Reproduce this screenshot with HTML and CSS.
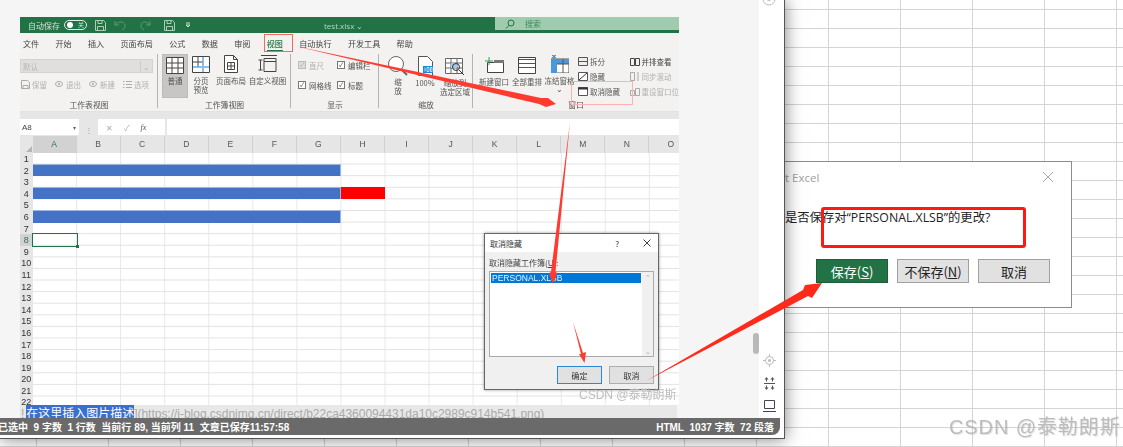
FILE: index.html
```html
<!DOCTYPE html>
<html lang="zh">
<head>
<meta charset="utf-8">
<title>Excel</title>
<link rel="stylesheet" href="styles.css">
</head>
<body>
<section class="save-dialog">
  <div class="sd-title"><span>t Excel</span><svg width="12" height="12" viewBox="0 0 12 12"><path d="M1 1l10 10M11 1L1 11" stroke="#aaa" fill="none"/></svg></div>
  <p class="sd-msg">是否保存对“PERSONAL.XLSB”的更改?</p>
  <div class="sd-btns"><button class="sd-btn primary">保存(<u>S</u>)</button><button class="sd-btn">不保存(<u>N</u>)</button><button class="sd-btn">取消</button></div>
</section>

<main class="app">
  <div class="work">
    <div class="excel">
      <header class="titlebar">
        <span class="autosave">自动保存</span>
        <span class="toggle"><i></i><b>关</b></span>
        <svg class="tb-ic" width="11" height="11" viewBox="0 0 11 11"><path d="M.5.5h8l2 2v8H.5zM3 .5v3h4v-3M2.5 10.500v-4h6v4" fill="none" stroke="#a9d0b8"/></svg>
        <svg class="tb-ic u" width="14" height="11" viewBox="0 0 14 11"><path d="M1 1v4h4M1 5c3-4 9-4 10 0 .5 2-1 4-3 5" fill="none" stroke="#5c9a77"/></svg>
        <svg class="tb-ic r" width="14" height="11" viewBox="0 0 14 11"><path d="M11 1v4H7M11 5C8 1 3 1 2 5c-.5 2 1 4 3 5" fill="none" stroke="#5c9a77"/></svg>
        <svg class="tb-ic s" width="11" height="11" viewBox="0 0 11 11"><path d="M.5.5h8l2 2v8H.5zM3 .5v3h4v-3M2.500 10.500v-4h6v4" fill="none" stroke="#a9d0b8"/></svg>
        <svg class="tb-ic c" width="6" height="6" viewBox="0 0 6 6"><path d="M1 1h4M1 3l2 2 2-2z" stroke="#cfe3d6" fill="none"/></svg>
        <span class="docname">test.xlsx ⌄</span>
        <div class="search"><svg width="10" height="10" viewBox="0 0 10 10"><circle cx="6" cy="4" r="3" fill="none" stroke="#217346"/><path d="M4 6.500L1 9.500" stroke="#217346"/></svg><span>搜索</span></div>
      </header>
      <nav class="tabs"><span>文件</span><span>开始</span><span>插入</span><span>页面布局</span><span>公式</span><span>数据</span><span>审阅</span><span class="on">视图</span><span>自动执行</span><span>开发工具</span><span>帮助</span></nav>

      <div class="ribbon">
        <div class="grp g1">
          <div class="grp-body col">
            <div class="combo"><span>默认</span><i>⌄</i></div>
            <div class="minis">
              <span><svg width="9" height="9" viewBox="0 0 9 9"><path d="M.5.500h6l2 2v6H.5zM2 8.500v-3h5v3" fill="none" stroke="#aaa"/></svg>保留</span>
              <span><svg width="9" height="9" viewBox="0 0 9 9"><ellipse cx="4" cy="4" rx="3.500" ry="2.500" fill="none" stroke="#aaa"/><circle cx="4" cy="4" r="1" fill="#aaa"/></svg>退出</span>
              <span><svg width="9" height="9" viewBox="0 0 9 9"><ellipse cx="4" cy="4" rx="3.500" ry="2.500" fill="none" stroke="#aaa"/><circle cx="4" cy="4" r="1" fill="#aaa"/></svg>新建</span>
              <span><svg width="9" height="9" viewBox="0 0 9 9"><path d="M0 1.500h1.500M0 4.500h1.500M0 7.500h1.500M3 1.500h6M3 4.500h6M3 7.500h6" stroke="#aaa"/></svg>选项</span>
            </div>
          </div>
          <div class="grp-label">工作表视图</div>
        </div>

        <div class="grp g2">
          <div class="grp-body views">
            <div class="big normal"><svg width="18" height="17" viewBox="0 0 18 17"><path d="M.5.500h17v16H.5zM6 .5v16M12 .5v16M.5 6h17M.5 11h17" fill="#fff" stroke="#444"/></svg><span>普通</span></div>
            <div class="big w-a"><svg width="18" height="17" viewBox="0 0 18 17"><path d="M.5.500h17v16H.5z" fill="#fff" stroke="#444"/><path d="M1 11h16M11 1v15" stroke="#8cc0e8" stroke-width="2"/><path d="M6 .5v10M.5 6h10" stroke="#444"/></svg><span>分页<br>预览</span></div>
            <div class="big w-b"><svg width="14" height="18" viewBox="0 0 14 18"><path d="M.5.500h9l4 4v13H.5zM9.500.5v4h4" fill="#fff" stroke="#444"/><path d="M3.500 7.500h7v7h-7zM3.500 11h7M7 7.500v7" fill="none" stroke="#444"/></svg><span>页面布局</span></div>
            <div class="big w-c"><svg width="20" height="18" viewBox="0 0 20 18"><path d="M3 .5h16M6 3.500h12v13H6zM6 6.500h12M.5 5h4M2.500 5v10M.5 15h4" fill="none" stroke="#444"/></svg><span>自定义视图</span></div>
          </div>
          <div class="grp-label">工作簿视图</div>
        </div>

        <div class="grp g3">
          <div class="grp-body checks">
            <label class="chk off"><i>✓</i>直尺</label><label class="chk"><i>✓</i>编辑栏</label>
            <label class="chk"><i>✓</i>网格线</label><label class="chk"><i>✓</i>标题</label>
          </div>
          <div class="grp-label">显示</div>
        </div>

        <div class="grp g4">
          <div class="grp-body zooms">
            <div class="big z1"><svg width="20" height="20" viewBox="0 0 20 20"><circle cx="8" cy="8" r="7.500" fill="#fff" stroke="#666"/><path d="M13 13l6 6" stroke="#666" stroke-width="2"/></svg><span>缩<br>放</span></div>
            <div class="big z2"><svg width="15" height="20" viewBox="0 0 15 20"><path d="M.5.500h9l5 5v14H.5z" fill="#fff" stroke="#555"/><rect x="5" y="10" width="10" height="7" fill="#1e88d8"/><path d="M7 11.500v4M9 11.500h2v4H9zM12.500 11.500h1.500v4h-1.500z" fill="none" stroke="#fff" stroke-width=".7"/></svg><span>100%</span></div>
            <div class="big z3"><svg width="20" height="18" viewBox="0 0 20 18"><path d="M.5.500h17v15H.5zM6 .5v15M12 .5v15M.5 5h17M.5 10h17" fill="#fff" stroke="#666"/><rect x="6" y="5" width="6" height="5" fill="#9fcdf0"/><circle cx="11" cy="9" r="3.500" fill="none" stroke="#333"/><path d="M14 12l5 5" stroke="#333"/></svg><span>缩放到<br>选定区域</span></div>
          </div>
          <div class="grp-label">缩放</div>
        </div>

        <div class="grp g5">
          <div class="grp-body wins">
            <div class="big n1"><svg width="20" height="16" viewBox="0 0 20 16"><path d="M3.500 5.500h16v10h-16z" fill="#fff" stroke="#444"/><rect x="10" y="3" width="10" height="3" fill="#777"/><path d="M5 0v8M1 4h8" stroke="#2e9b5b" stroke-width="1"/></svg><span>新建窗口</span></div>
            <div class="big n2"><svg width="18" height="17" viewBox="0 0 18 17"><path d="M.5.500h17v16H.5z" fill="#fff" stroke="#444"/><path d="M1 2.500h16M1 6.500h16M1 10.500h16" stroke="#555"/></svg><span>全部重排</span></div>
            <div class="big n3"><svg width="18" height="18" viewBox="0 0 18 18"><rect y="4" width="18" height="14" fill="#fff" stroke="#555"/><rect y="4" width="18" height="5" fill="#4a97dc"/><rect y="4" width="6" height="14" fill="#4a97dc"/><path d="M6 9h12M12 4v14" stroke="#555"/><path d="M1 3l4-3M1 0l4 3M3 -1v5" stroke="#1e88d8"/></svg><span>冻结窗格</span><em>⌄</em></div>
            <div class="stack">
              <span><svg width="10" height="9" viewBox="0 0 10 9"><path d="M.5.500h9v8h-9zM.5 4.500h9" fill="#eee" stroke="#555"/></svg>拆分</span>
              <span><svg width="10" height="9" viewBox="0 0 10 9"><path d="M.5.500h9v8h-9z" fill="#fff" stroke="#555"/><path d="M1 8l8-7" stroke="#333"/></svg>隐藏</span>
              <span><svg width="10" height="9" viewBox="0 0 10 9"><path d="M.5.500h9v8h-9z" fill="#fff" stroke="#555"/><path d="M0 1.500h10" stroke="#333" stroke-width="2"/></svg>取消隐藏</span>
            </div>
            <div class="stack more">
              <span><svg width="10" height="8" viewBox="0 0 10 8"><path d="M.5.500h4v7h-4zM5.500.5h4v7h-4z" fill="none" stroke="#444"/></svg>并排查看</span>
              <span class="dim"><svg width="10" height="9" viewBox="0 0 10 9"><path d="M.5.500h4v8h-4zM8 0v9" fill="none" stroke="#aaa"/></svg>同步滚动</span>
              <span class="dim"><svg width="10" height="9" viewBox="0 0 10 9"><path d="M.5 3.500h4v5h-4zM5.500 1.500h4v7h-4z" fill="none" stroke="#aaa"/></svg>重设窗口位</span>
            </div>
          </div>
          <div class="grp-label">窗口</div>
        </div>
      </div>

      <div class="formula">
        <div class="namebox"><span>A8</span><i>▾</i></div>
        <span class="dots">⋮</span>
        <div class="fx"><span class="x">✕</span><span class="x">✓</span><em>fx</em></div>
        <div class="finput"></div>
      </div>

      <div class="colheads">
        <div class="corner"></div>
        <span class="sel">A</span><span>B</span><span>C</span><span>D</span><span>E</span><span>F</span><span>G</span><span>H</span><span>I</span><span>J</span><span>K</span><span>L</span><span>M</span><span>N</span><span>O</span>
      </div>

      <div class="sheet">
        <div class="cells"></div>
        <b class="rh">1</b><b class="rh">2</b><b class="rh">3</b><b class="rh">4</b><b class="rh">5</b><b class="rh">6</b><b class="rh">7</b><b class="rh cur">8</b><b class="rh">9</b><b class="rh">10</b><b class="rh">11</b><b class="rh">12</b><b class="rh">13</b><b class="rh">14</b><b class="rh">15</b><b class="rh">16</b><b class="rh">17</b><b class="rh">18</b><b class="rh">19</b><b class="rh">20</b><b class="rh">21</b><b class="rh">22</b>
        <div class="bar r2"></div>
        <div class="bar r4"></div>
        <div class="red"></div>
        <div class="bar r6"></div>
        <div class="cursor"></div>
      </div>
    </div>

    <div class="caption">!<span class="picked">在这里插入图片描述</span>](https://i-blog.csdnimg.cn/direct/b22ca4360094431da10c2989c914b541.png)</div>
    <div class="thumb"></div>

    <section class="hide-dialog">
      <div class="hd-title"><span>取消隐藏</span><i>?</i><svg width="8" height="8" viewBox="0 0 8 8"><path d="M.5.500l7 7M7.500.500l-7 7" stroke="#444" fill="none"/></svg></div>
      <div class="hd-body">
        <div class="hd-label">取消隐藏工作簿(<u>U</u>):</div>
        <div class="hd-list">
          <div class="hd-items"><div class="hd-item">PERSONAL.XLSB</div></div>
          <div class="hd-scroll"><span>⌃</span><span>⌄</span></div>
        </div>
        <div class="hd-btns"><button class="hd-btn def">确定</button><button class="hd-btn">取消</button></div>
      </div>
    </section>
    <div class="wm-small">CSDN @泰勒朗斯</div>
  </div>

  <aside class="rail">
    <svg class="rail-top" width="14" height="14" viewBox="0 0 14 14"><circle cx="7" cy="7" r="6" fill="none" stroke="#bbb"/><circle cx="7" cy="7" r="2" fill="#bbb"/></svg>
    <svg width="13" height="13" viewBox="0 0 13 13"><circle cx="6.500" cy="6.500" r="4" fill="none" stroke="#bbb"/><circle cx="6.500" cy="6.500" r="1.500" fill="#bbb"/><path d="M6.500 0v3M6.500 10v3M0 6.500h3M10 6.500h3" stroke="#bbb"/></svg>
    <svg width="11" height="13" viewBox="0 0 11 13"><path d="M0 6.500h11" stroke="#556"/><path d="M2.500 0l2 2.500H.5zM8.500 0l2 2.500h-4zM2.500 13l2-2.500H.5zM8.500 13l2-2.500h-4z" fill="#556"/><path d="M2.500 2v2.500M8.500 2v2.500M2.500 8.500V11M8.500 8.500V11" stroke="#556"/></svg>
    <svg width="13" height="12" viewBox="0 0 13 12"><path d="M1.500.5h10v8h-10zM0 11.500h13" fill="none" stroke="#445"/></svg>
  </aside>

  <footer class="status">
    <span class="st-left">已选中&nbsp; 9 字数&nbsp; 1 行数&nbsp; 当前行 89, 当前列 11&nbsp; 文章已保存11:57:58</span>
    <span class="st-right">HTML&nbsp; 1037 字数&nbsp; 72 段落</span>
  </footer>
</main>

<div class="mark-tab"></div>
<div class="mark-win"></div>
<div class="mark-msg"></div>
<svg class="arrows" width="1123" height="447" viewBox="0 0 1123 447">
  <path d="M295 46L541 98L548 98L556 104L546 107L539 104Z" fill="#ff3b30"/>
  <path d="M570 122L555.500 272L557.500 273L553 284L549 273L551 272Z" fill="#ff3b30"/>
  <path d="M573 322L583 353L586 352L584.500 363L579 354L581 354Z" fill="#ff3b30"/>
  <path d="M646 381L803 290L805 285L822 283L812 298L808 296Z" fill="#ff2a1a"/>
</svg>
<div class="wm-big">CSDN @泰勒朗斯</div>
</body>
</html>
```

FILE: styles.css
```css
* { box-sizing: border-box; }
html, body { margin: 0; padding: 0; }
body {
  width: 1123px; height: 447px; overflow: hidden; position: relative;
  font-family: "Liberation Sans", "Noto Sans CJK SC", sans-serif;
  background-color: #fff;
  background-image:
    linear-gradient(#d4d4d4 1px, transparent 1px),
    linear-gradient(90deg, #d4d4d4 1px, transparent 1px);
  background-size: 72px 19px;
  background-position: 36px 9px;
}
button { font-family: inherit; padding: 0; margin: 0; }

/* behind-window dialog */
.save-dialog {
  position: absolute; left: 760px; top: 161px; width: 312px; height: 147px;
  background: #fff; border: 1px solid #8c8c8c; padding-left: 24px;
  display: flex; flex-direction: column;
}
.sd-title { display: flex; justify-content: space-between; align-items: center; height: 30px; padding-right: 17px; color: #a0a0a0; font: 11.500px "Open Sans", sans-serif; }
.sd-msg { margin: 17px 0 0; font: 12.300px "Open Sans", "Noto Sans CJK SC", sans-serif; color: #222; line-height: 18px; height: 18px; white-space: nowrap; }
.sd-btns { display: flex; gap: 9px; margin-top: 32px; padding-left: 31px; }
.sd-btn { width: 72px; height: 24px; border: 1px solid #a0a0a0; background: #e1e1e1; color: #222; font: 13px "Noto Sans CJK SC", sans-serif; }
.sd-btn.primary { background: #217346; border-color: #1b5e39; color: #fff; }

/* the editor window */
.app {
  position: absolute; left: 0; top: 0; width: 785px; height: 439px;
  background: #fff; border-right: 1px solid #555; border-bottom: 1px solid #555;
  box-shadow: 0 0 16px rgba(0,0,0,.5);
  display: grid; grid-template-columns: 759px 21px 4px; grid-template-rows: 418px 17px 3px;
}
.work { grid-column: 1; grid-row: 1; background: #f5f5f5; padding-top: 17px; position: relative; overflow: hidden; }
.rail { grid-column: 2 / 4; grid-row: 1; position: relative; display: flex; flex-direction: column; align-items: center; justify-content: flex-end; gap: 10px; padding: 0 4px 6px 0; }
.rail-top { position: absolute; left: 3px; top: -8px; }
.thumb { position: absolute; left: 753px; top: 333px; width: 6px; height: 21px; border-radius: 3px; background: #b9b9b9; }

.status {
  grid-column: 1 / 3; grid-row: 2; background: #6a6a6a; color: #fff; font-weight: 700; font-size: 10px;
  display: flex; justify-content: space-between; align-items: center; padding-right: 6px;
  border-bottom-right-radius: 8px; white-space: nowrap;
}
.st-left { margin-left: -2px; }

/* excel screenshot */
.excel { margin-left: 20px; width: 659px; height: 388px; overflow: hidden; display: flex; flex-direction: column; background: #f3f2f1; filter: blur(.4px); font-family: "Noto Sans CJK SC", "Liberation Sans", sans-serif; color: #444; }
.titlebar { height: 16px; flex: none; background: #217346; display: flex; align-items: center; color: #cfe3d6; font-size: 8px; position: relative; }
.autosave { margin-left: 8px; }
.toggle { margin-left: 4px; width: 23px; height: 10px; border: 1px solid #dfeee5; border-radius: 5px; display: flex; align-items: center; justify-content: space-between; padding: 0 2px; }
.toggle i { width: 6px; height: 6px; border-radius: 50%; background: #fff; }
.toggle b { font-weight: 400; font-size: 6px; line-height: 8px; }
.tb-ic { margin-left: 8px; flex: none; }
.tb-ic.r { margin-left: 11px; }
.tb-ic.s { margin-left: 11px; }
.tb-ic.c { margin-left: 10px; }
.docname { margin-left: 133px; color: #b7d4c2; font-size: 8px; font-family: "Open Sans", sans-serif; white-space: nowrap; }
.search { position: absolute; left: 475px; right: 0; top: 0; height: 13px; background: #9fcbae; display: flex; align-items: center; gap: 10px; padding-left: 10px; color: #3f8a60; }

.tabs { height: 20px; flex: none; background: #f3f2f1; display: flex; align-items: center; gap: 16.300px; padding-left: 3px; font-size: 8.100px; color: #444; white-space: nowrap; }
.tabs .on { position: relative; color: #217346; font-weight: 500; }
.tabs .on::after { content: ""; position: absolute; left: 0; right: 0; bottom: -3px; height: 1.500px; background: #217346; }

.ribbon { height: 59px; flex: none; display: flex; background: #f3f2f1; font-size: 7.500px; color: #555; white-space: nowrap; border-bottom: 1px solid #e2e2e2; }
.grp { display: flex; flex-direction: column; position: relative; flex: none; }
.grp:not(:last-child)::after { content: ""; position: absolute; right: 0; top: 1px; bottom: 3px; width: 1px; background: #b4b4b4; }
.grp-body { height: 47px; flex: none; display: flex; }
.grp-label { height: 11px; line-height: 9px; text-align: center; font-size: 7.800px; color: #555; }
.g1 { width: 138px; } .g2 { width: 133px; } .g3 { width: 88px; } .g4 { width: 94px; } .g5 { flex: 1; min-width: 0; overflow: hidden; }
.col { flex-direction: column; }
.combo { width: 133px; height: 14px; margin-top: 6px; background: #e1dfdd; border: 1px solid #d5d3d1; display: flex; justify-content: space-between; align-items: center; padding: 0 2px; color: #b5b5b5; font-size: 7.500px; }
.combo i { font-style: normal; border-left: 1px solid #ccc; padding-left: 2px; }
.minis { display: flex; margin-top: 6px; gap: 8px; color: #b0b0b0; padding-left: 1px; }
.minis span { display: flex; align-items: center; gap: 2px; width: 26px; }
.views { padding-left: 4px; }
.big { display: flex; flex-direction: column; align-items: center; text-align: center; line-height: 9px; position: relative; flex: none; }
.big svg { flex: none; }
.normal { width: 26px; height: 44px; margin-top: 1px; background: #c8c6c4; border: 1px solid #bdbbb9; padding-top: 2px; }
.normal span { margin-top: 2px; }
.w-a { width: 18px; margin-left: 4px; padding-top: 3px; }
.w-a span, .w-b span, .w-c span { margin-top: 3px; }
.w-b { width: 30px; margin-left: 6px; padding-top: 2px; }
.w-c { width: 37px; margin-left: 3px; padding-top: 2px; }
.checks { display: grid; grid-template-columns: 39px 39px; grid-auto-rows: 20px; padding: 2px 0 0 7px; }
.chk { display: flex; align-items: center; gap: 3px; }
.chk i { width: 8px; height: 8px; border: 1px solid #777; background: #fff; font-style: normal; font-size: 6px; line-height: 6px; text-align: center; color: #333; }
.chk.off { color: #b0b0b0; }
.chk.off i { border-color: #bbb; background: #ddd; color: #aaa; }
.zooms { padding-left: 9px; }
.z1 { width: 20px; padding-top: 3px; } .z1 span { margin-top: 1px; }
.z2 { width: 24px; margin-left: 5px; padding-top: 3px; } .z2 span { margin-top: 2px; }
.z3 { width: 32px; margin-left: 2px; padding-top: 5px; } .z3 span { margin-top: 2px; }
.wins { padding-left: 6px; }
.n1 { width: 30px; padding-top: 4px; } .n1 span { margin-top: 4px; }
.n2 { width: 30px; margin-left: 3px; padding-top: 4px; } .n2 span { margin-top: 3px; }
.n3 { width: 31px; margin-left: 2px; padding-top: 2px; } .n3 span { margin-top: 3px; } .n3 em { font-style: normal; line-height: 7px; }
.stack { display: flex; flex-direction: column; padding-top: 1px; margin-left: 3px; width: 51px; }
.stack span { display: flex; align-items: center; gap: 2px; height: 15px; }
.stack.more { margin-left: 0; padding-left: 1px; color: #444; position: relative; }
.stack .dim { color: #b0b0b0; }

.formula { height: 24px; flex: none; background: #e6e6e6; display: flex; align-items: flex-end; padding-bottom: 1px; font-size: 8px; }
.namebox { width: 59px; height: 16px; background: #fff; display: flex; justify-content: space-between; align-items: center; padding: 0 3px 0 2px; font-family: "Liberation Sans", sans-serif; }
.namebox i { font-style: normal; font-size: 6px; color: #666; }
.dots { width: 19px; text-align: center; color: #999; }
.fx { width: 67px; height: 16px; background: #fff; display: flex; align-items: center; gap: 11px; padding-left: 8px; color: #aaa; }
.fx em { color: #555; font-family: "Liberation Serif", serif; }
.finput { flex: 1; height: 16px; margin-left: 2px; background: #fff; }

.colheads { height: 17px; flex: none; background: #e6e6e6; display: grid; grid-template-columns: 12.500px repeat(15, 44.070px); font: 8.500px/17px "Liberation Sans", sans-serif; color: #555; text-align: center; }
.colheads span { border-right: 1px solid #d0d0d0; }
.colheads .sel { background: #d2d2d2; color: #217346; border-bottom: 1px solid #217346; }
.corner { position: relative; }
.corner::after { content: ""; position: absolute; right: 1px; bottom: 2px; border: 3px solid transparent; border-right-color: #b5b5b5; border-bottom-color: #b5b5b5; }

.sheet { flex: none; display: grid; grid-template-columns: 12.500px repeat(15, 44.070px); grid-template-rows: repeat(22, 11.600px); background: #fff; }
.cells { grid-column: 2 / -1; grid-row: 1 / -1; background-image: linear-gradient(#e2e2e2 1px, transparent 1px), linear-gradient(90deg, #e8e8e8 1px, transparent 1px); background-size: 44.070px 11.600px; background-position: -1px -1px; }
.rh { grid-column: 1; background: #e6e6e6; font: 400 9px/13.500px "Liberation Sans", sans-serif; color: #333; text-align: center; overflow: hidden; }
.rh.cur { background: #d2d2d2; color: #217346; }
.bar { grid-column: 2 / span 7; background: #4472c4; border: 1px solid #9db6e2; border-width: 1px 1px 0 0; margin-top: -1px; }
.r2 { grid-row: 2; } .r4 { grid-row: 4; } .r6 { grid-row: 6; }
.red { grid-column: 9; grid-row: 4; background: #ff0000; margin-top: -1px; }
.cursor { grid-column: 2; grid-row: 8; border: 1px solid #217346; position: relative; margin: -1px -1px -1px -1px; }
.cursor::after { content: ""; position: absolute; right: -2px; bottom: -2px; width: 3px; height: 3px; background: #217346; }

.caption { height: 13px; margin-left: 20px; width: 657px; background: #e8e8e8; font-size: 12px; line-height: 15px; color: #aaa; white-space: nowrap; overflow: hidden; padding-left: 1px; letter-spacing: -.02px; }
.picked { background: #3a6fd0; color: #fff; margin-left: 2px; font-family: "Noto Sans CJK SC", sans-serif; }

/* listing dialog */
.hide-dialog { position: absolute; left: 484px; top: 233px; width: 175px; height: 157px; border: 1px solid #666; box-shadow: 0 0 3px rgba(0,0,0,.4); background: #f0f0f0; display: flex; flex-direction: column; font-family: "Noto Sans CJK SC", sans-serif; filter: blur(.3px); }
.hd-title { height: 18px; flex: none; background: #fff; display: flex; align-items: center; font-size: 8px; color: #333; padding: 0 7px 0 5px; }
.hd-title span { flex: 1; }
.hd-title i { font-style: normal; margin-right: 24px; }
.hd-body { flex: 1; display: flex; flex-direction: column; padding: 5px 4px 0; }
.hd-label { font-size: 8px; line-height: 11px; color: #444; }
.hd-list { height: 86px; margin-top: 3px; background: #fff; border: 1px solid #aaa; display: flex; }
.hd-items { flex: 1; padding: 1px; }
.hd-item { background: #0078d7; color: #e8f2fb; font: 8.500px/10px "Liberation Sans", sans-serif; padding-left: 1px; }
.hd-scroll { width: 11px; background: #f0f0f0; display: flex; flex-direction: column; justify-content: space-between; align-items: center; color: #aaa; font-size: 7px; }
.hd-btns { display: flex; justify-content: flex-end; gap: 7px; margin-top: 9px; }
.hd-btn { width: 45px; height: 18px; background: #e1e1e1; border: 1px solid #adadad; font: 8px "Noto Sans CJK SC", sans-serif; color: #333; }
.hd-btn.def { border: 1.500px solid #2b88d8; }
.wm-small { position: absolute; left: 579px; top: 388px; font: 12px/15px "Liberation Sans", "Noto Sans CJK SC", sans-serif; color: #bdbdbd; white-space: nowrap; }

/* annotations */
.mark-tab { position: absolute; left: 264px; top: 34px; width: 29px; height: 18px; border: 1px solid #ef6a62; }
.mark-win { position: absolute; left: 571px; top: 81px; width: 62px; height: 24px; border: 1px solid #ffb0b0; }
.mark-msg { position: absolute; left: 821px; top: 207px; width: 205px; height: 41px; border: 3px solid #ff1a10; border-radius: 3px; }
.arrows { position: absolute; left: 0; top: 0; pointer-events: none; }
.wm-big { position: absolute; left: 949px; top: 414px; font: 20px/26px "Liberation Sans", "Noto Sans CJK SC", sans-serif; color: #bdbdbd; letter-spacing: .9px; white-space: nowrap; text-shadow: 1px 1px 1px rgba(0,0,0,.12); }
```
